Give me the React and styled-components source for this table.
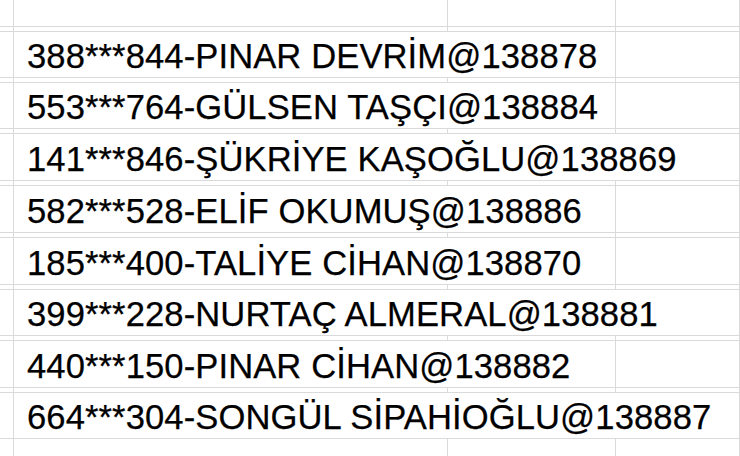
import React from 'react';
import styled, { createGlobalStyle } from "styled-components";

const GlobalStyle = createGlobalStyle`
    html, body {
        margin: 0;
        padding: 0;
        background-color: #ffffff;
    }
`

const entries = [
    { text: '388***844-PINAR DEVRİM@138878', height: 46, span: 2 },
    { text: '553***764-GÜLSEN TAŞÇI@138884', height: 46, span: 2 },
    { text: '141***846-ŞÜKRİYE KAŞOĞLU@138869', height: 47, span: 3 },
    { text: '582***528-ELİF OKUMUŞ@138886', height: 47, span: 2 },
    { text: '185***400-TALİYE CİHAN@138870', height: 47, span: 2 },
    { text: '399***228-NURTAÇ ALMERAL@138881', height: 46, span: 3 },
    { text: '440***150-PINAR CİHAN@138882', height: 47, span: 2 },
    { text: '664***304-SONGÜL SİPAHİOĞLU@138887', height: 46, span: 3 },
]

const Sheet = styled.div`
    width: 100%;
    height: 100vh;
    overflow: hidden;
    display: grid;
    grid-template-columns: 14px 434px 168px 1fr;
    align-content: start;
    font-family: "Liberation Sans", Arial, sans-serif;
`

const Row = styled.div`
    display: contents;
`

const Cell = styled.div`
    box-sizing: border-box;
    height: ${props => props.$height}px;
    border-right: 1px solid #dadada;
    border-bottom: 1px solid #dadada;
    background-color: #ffffff;
`

const TextCell = styled(Cell)`
    grid-column: span ${props => props.$span};
    display: flex;
    align-items: flex-end;
    padding: 0 0 4px 13px;
    font-size: 34.6px;
    line-height: 34px;
    letter-spacing: 0.1px;
    color: #000000;
    -webkit-text-stroke: 0.25px #000000;
    white-space: nowrap;
`

const BlankRow = ({ height }) => (
    <Row>
        <Cell $height={height} />
        <Cell $height={height} />
        <Cell $height={height} />
        <Cell $height={height} />
    </Row>
)

const EntryRow = ({ entry }) => (
    <Row>
        <Cell $height={entry.height} />
        <TextCell $height={entry.height} $span={entry.span}>{entry.text}</TextCell>
        {entry.span < 3 ? <Cell $height={entry.height} /> : null}
    </Row>
)

const App = () => {
    return (
        <>
            <GlobalStyle />
            <Sheet>
                <BlankRow height={27} />
                {entries.map((entry) => (
                    <React.Fragment key={entry.text}>
                        <BlankRow height={5} />
                        <EntryRow entry={entry} />
                    </React.Fragment>
                ))}
                <BlankRow height={46} />
            </Sheet>
        </>
    )
}

export default App
